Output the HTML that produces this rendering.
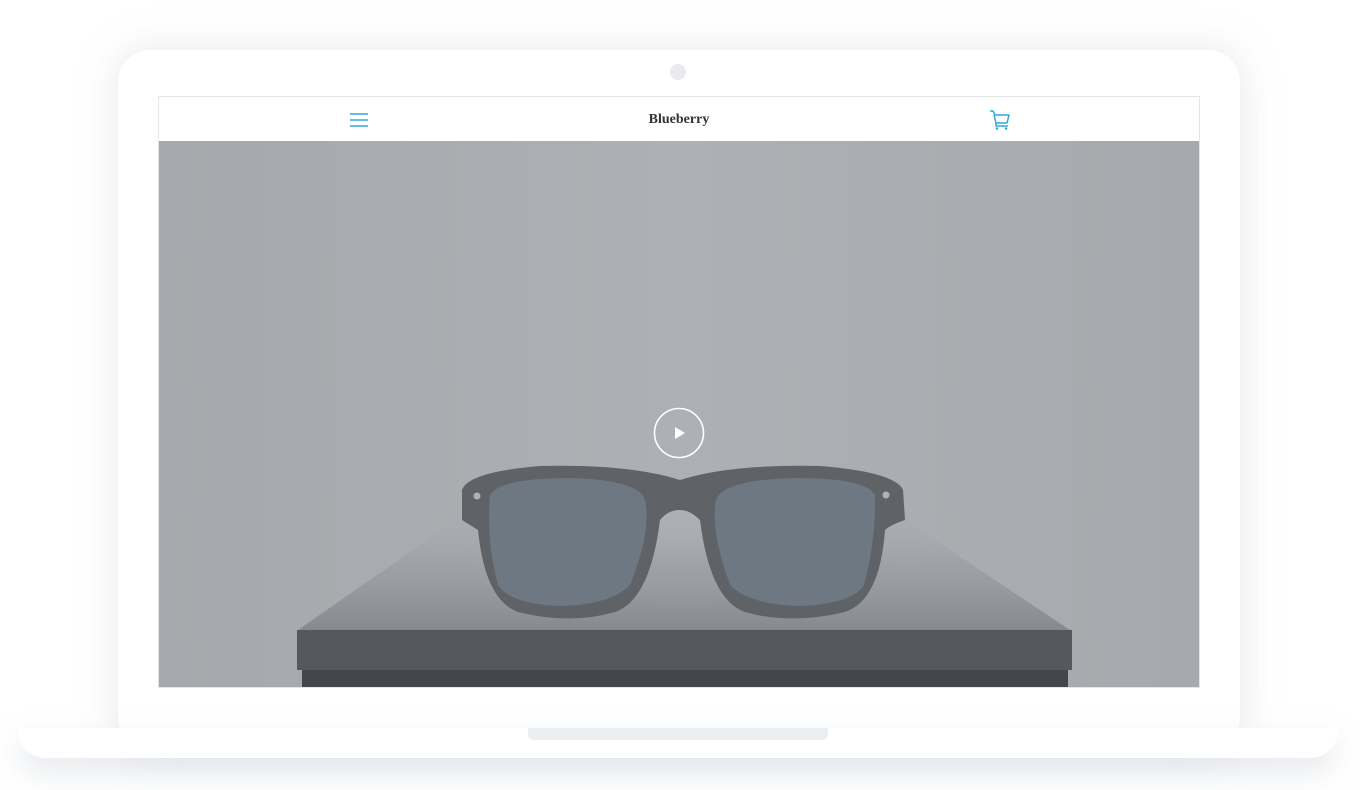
<!DOCTYPE html>
<html><head><style>
html,body{margin:0;padding:0;background:#fff;width:1360px;height:790px;overflow:hidden;position:relative;font-family:"Liberation Sans",sans-serif}
.body{position:absolute;left:118px;top:50px;width:1122px;height:700px;background:#fff;border-radius:32px;box-shadow:0 0 40px rgba(180,188,200,.35)}
.base{position:absolute;left:18px;top:728px;width:1320px;height:30px;background:#fff;border-radius:0 0 28px 28px;box-shadow:0 14px 30px rgba(180,188,200,.35)}
.notch{position:absolute;left:528px;top:728px;width:300px;height:12px;background:#ebeef1;border-radius:0 0 6px 6px}
.cam{position:absolute;left:670px;top:64px;width:16px;height:16px;border-radius:50%;background:#e8eaed}
.screen{position:absolute;left:158px;top:96px;width:1040px;height:590px;border:1px solid #e4e5e6;background:#fff;overflow:hidden}
.hdr{position:absolute;left:0;top:0;width:1040px;height:44px;background:#fff}
.title{position:absolute;left:0;width:1040px;top:15px;text-align:center;font-family:"Liberation Serif",serif;font-weight:bold;font-size:14px;color:#333}
</style></head><body>
<div class="body"></div>
<div class="base"></div>
<div class="notch"></div>
<div class="cam"></div>
<div class="screen">
<div class="hdr">
<svg style="position:absolute;left:190px;top:14px" width="20" height="16"><g stroke="#2fa8dd" stroke-width="1.6"><line x1="1" y1="3" x2="19" y2="3"/><line x1="1" y1="9" x2="19" y2="9"/><line x1="1" y1="15" x2="19" y2="15"/></g></svg>
<div class="title">Blueberry</div>
<svg style="position:absolute;left:830px;top:12px" width="22" height="22" viewBox="0 0 22 22"><g fill="none" stroke="#2fa8dd" stroke-width="1.5" stroke-linejoin="round"><path d="M1 2h3l2 4h14l-2 8H7L5 6"/><path d="M7 14v3h12"/></g><circle cx="8" cy="19.5" r="1.3" fill="#2fa8dd"/><circle cx="17" cy="19.5" r="1.3" fill="#2fa8dd"/></svg>
</div>
<svg style="position:absolute;left:0;top:44px" width="1040" height="546" viewBox="159 141 1040 546">
<defs>
<linearGradient id="bg" x1="0" y1="0" x2="1" y2="0"><stop offset="0" stop-color="#a5a8ac"/><stop offset=".5" stop-color="#adb0b4"/><stop offset="1" stop-color="#a6a9ad"/></linearGradient>
<linearGradient id="top" x1="0" y1="0" x2="0" y2="1"><stop offset="0" stop-color="#a8abaf" stop-opacity="0"/><stop offset=".45" stop-color="#9a9da1" stop-opacity=".7"/><stop offset="1" stop-color="#86898d"/></linearGradient>
</defs>
<rect x="159" y="141" width="1040" height="546" fill="url(#bg)"/>
<polygon points="470,510 890,510 1070,630 298,630" fill="url(#top)"/>
<rect x="297" y="630" width="775" height="40" fill="#55585c"/>
<rect x="302" y="670" width="766" height="17" fill="#43464a"/>
<path d="M495 500 L570 600 L600 600 L515 495Z" fill="#5a5e63"/>
<path d="M870 490 L790 600 L760 600 L855 485Z" fill="#5a5e63"/>
<path d="M462 490 Q468 472 540 466 Q630 464 680 480 Q730 464 820 466 Q895 472 903 490 L905 520 Q890 525 885 530 Q880 600 845 612 Q790 625 745 612 Q710 600 700 520 Q690 510 680 510 Q668 510 660 520 Q650 600 615 612 Q570 625 518 612 Q485 600 478 530 Q470 525 462 520Z" fill="#5f6266"/>
<path d="M490 495 Q500 478 570 478 Q640 480 645 500 Q652 530 630 585 Q610 605 560 606 Q510 604 498 585 Q486 540 490 495Z" fill="#6e7882"/>
<path d="M875 495 Q866 478 795 478 Q722 480 716 500 Q710 530 730 585 Q750 605 800 606 Q852 604 864 585 Q876 540 875 495Z" fill="#6e7882"/>
<circle cx="477" cy="496" r="3.5" fill="#b0b2b4"/><circle cx="886" cy="495" r="3.5" fill="#b0b2b4"/>
<circle cx="679" cy="433" r="24.5" fill="none" stroke="#fff" stroke-width="1.6"/>
<path d="M675 427 L685 433 L675 439Z" fill="#fff"/>
</svg>
</div>
</body></html>
